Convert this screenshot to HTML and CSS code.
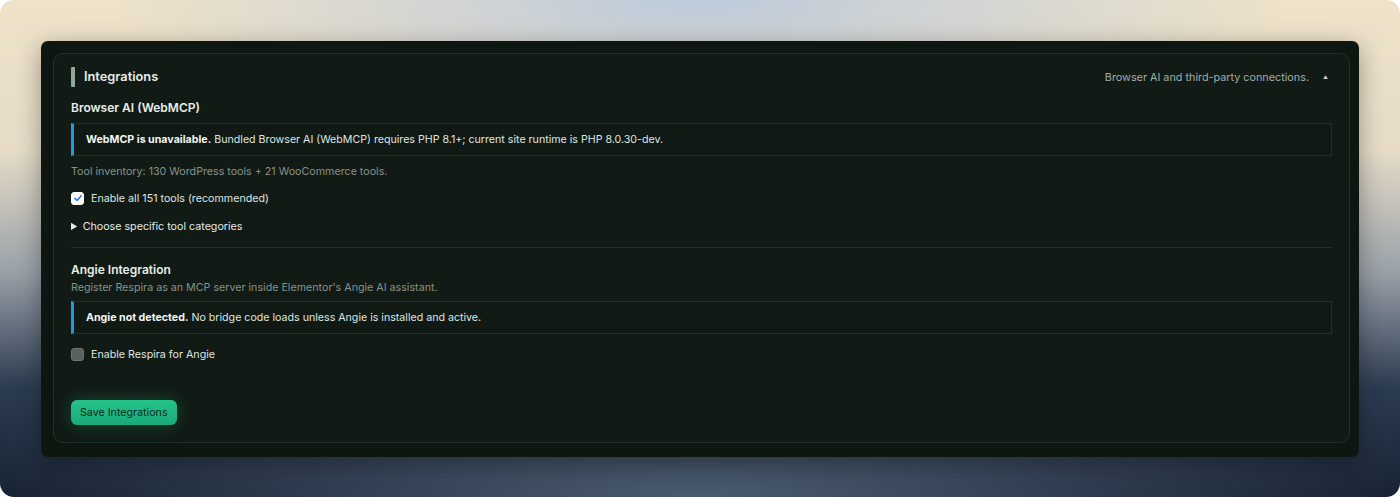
FILE: index.html
```html
<!DOCTYPE html>
<html lang="en">
<head>
    <meta charset="UTF-8">
    <meta name="viewport" content="width=device-width, initial-scale=1.0">
    <title>Integrations</title>
    <link rel="stylesheet" href="styles.css">
</head>
<body>
    <div class="stage">
        <div class="panel">
            <section class="card">
                <header class="card-head">
                    <h2 class="card-title">Integrations</h2>
                    <div class="card-meta">
                        <span>Browser AI and third-party connections.</span>
                        <span class="caret">&#9650;</span>
                    </div>
                </header>

                <h3 class="group-title">Browser AI (WebMCP)</h3>
                <div class="notice"><strong>WebMCP is unavailable.</strong> Bundled Browser AI (WebMCP) requires PHP 8.1+; current site runtime is PHP 8.0.30-dev.</div>
                <p class="hint">Tool inventory: 130 WordPress tools + 21 WooCommerce tools.</p>
                <label class="check">
                    <span class="box checked">
                        <svg viewBox="0 0 12 12" width="10" height="10"><path d="M2.2 6.3 L4.9 8.9 L9.8 3.2" fill="none" stroke="#2a7ef0" stroke-width="1.9" stroke-linecap="round" stroke-linejoin="round"/></svg>
                    </span>
                    Enable all 151 tools (recommended)
                </label>
                <details class="categories">
                    <summary>Choose specific tool categories</summary>
                </details>

                <hr class="divider">

                <h3 class="group-title angie">Angie Integration</h3>
                <p class="hint tight">Register Respira as an MCP server inside Elementor's Angie AI assistant.</p>
                <div class="notice"><strong>Angie not detected.</strong> No bridge code loads unless Angie is installed and active.</div>
                <label class="check">
                    <span class="box"></span>
                    Enable Respira for Angie
                </label>

                <button class="btn-save">Save Integrations</button>
            </section>
        </div>
    </div>
</body>
</html>
```

FILE: styles.css
```css
* {
    box-sizing: border-box;
}

html, body {
    margin: 0;
    height: 100%;
    background: #ffffff;
}

body {
    font-family: "Inter", "Noto Sans", sans-serif;
    color: #e4eae6;
}

.stage {
    height: 497px;
    padding: 41px 41px 0 41px;
    border-radius: 14px;
    overflow: hidden;
    background:
        radial-gradient(ellipse 42% 24% at 50% 0%, #bccadb 0%, rgba(188, 202, 219, 0) 100%),
        radial-gradient(ellipse 60% 42% at 50% 100%, #4b5b6f 0%, rgba(75, 91, 111, 0) 100%),
        linear-gradient(to bottom, #eee2c8 0%, #e6dcc8 30%, #98a0a8 55%, #2b3b50 78%, #0c1728 100%);
}

.panel {
    background: #0d1611;
    border-radius: 7px;
    padding: 12px 9px 14px 12px;
    box-shadow: 0 6px 24px rgba(0, 0, 0, 0.35);
}

.card {
    background: #111a15;
    border: 1px solid #1f3329;
    border-radius: 10px;
    padding: 13px 17px 17px 17px;
}

/* Header */
.card-head {
    display: flex;
    align-items: center;
    justify-content: space-between;
    height: 20px;
}

.card-title {
    margin: 0;
    font-size: 12.8px;
    font-weight: 600;
    color: #e8eee9;
    border-left: 4px solid #8ea796;
    border-radius: 1px;
    padding-left: 9px;
    line-height: 20px;
}

.card-meta {
    display: flex;
    align-items: center;
    gap: 14px;
    font-size: 10.8px;
    color: #a2aea7;
}

.caret {
    font-size: 5px;
    color: #c9d1cc;
    width: 8px;
    margin-right: 1px;
}

.group-title {
    margin: 13px 0 7px 0;
    font-size: 12px;
    font-weight: 600;
    line-height: 16px;
    color: #e8eee9;
}

.group-title.angie {
    margin-top: 14px;
    margin-bottom: 2px;
}

.notice {
    height: 33px;
    display: flex;
    align-items: center;
    padding: 0 12px;
    font-size: 10.65px;
    color: #dfe6e1;
    background: #101914;
    border: 1px solid #1e3228;
    border-left: 3px solid #1d9ce3;
}

.notice strong {
    font-weight: 700;
    color: #f2f5f3;
    margin-right: 3px;
}

.hint {
    margin: 8px 0 11px 0;
    font-size: 10.7px;
    line-height: 15px;
    color: #86938b;
}

.hint.tight {
    margin: 0 0 6px 0;
}

.check {
    display: flex;
    align-items: center;
    gap: 7px;
    height: 16px;
    font-size: 10.7px;
    color: #dfe6e1;
}

.notice + .check {
    margin-top: 12px;
}

.box {
    width: 13px;
    height: 13px;
    border-radius: 3px;
    background: #5a605c;
    border: 1px solid #6d736f;
    display: flex;
    align-items: center;
    justify-content: center;
}

.box.checked {
    background: #ffffff;
    border-color: #ffffff;
}

.categories {
    margin-top: 12px;
}

.categories summary {
    font-size: 10.7px;
    line-height: 16px;
    color: #e4eae6;
    cursor: pointer;
}

.categories summary::marker {
    font-size: 11px;
}

.divider {
    border: none;
    border-top: 1px solid #1f3329;
    margin: 12px 0 0 0;
}

.btn-save {
    display: block;
    margin-top: 38px;
    height: 25px;
    padding: 0 9px;
    border: none;
    border-radius: 6px;
    font-family: inherit;
    font-size: 10.7px;
    color: #0b2a1c;
    background: linear-gradient(to bottom, #25c48b, #1aa979);
    box-shadow: 0 0 18px rgba(34, 170, 110, 0.35);
    cursor: pointer;
}
```
